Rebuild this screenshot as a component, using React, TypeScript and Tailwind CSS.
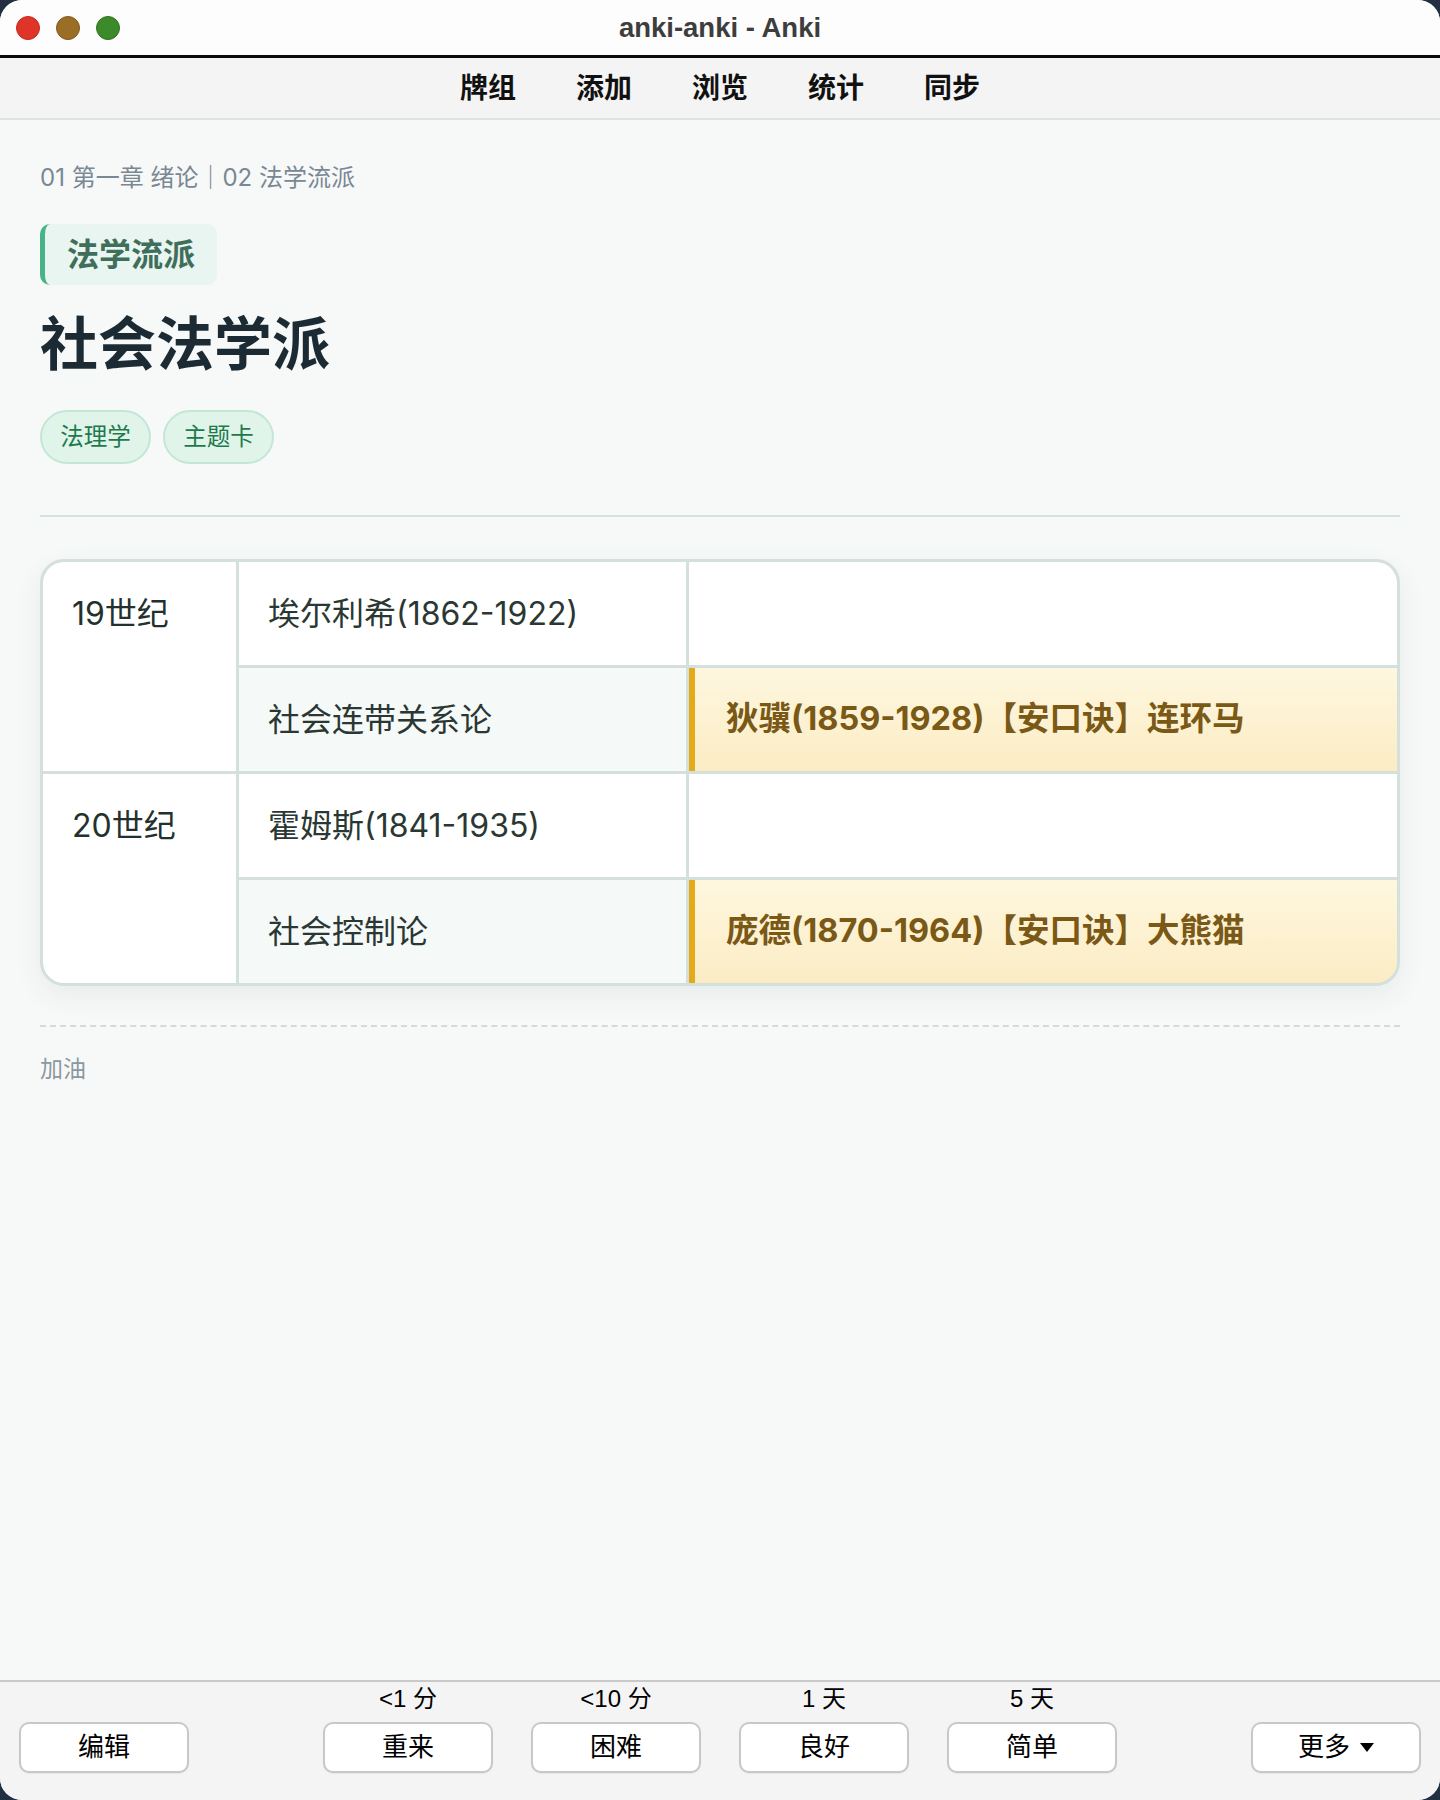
import React from "react";

const sans = { fontFamily: '"Inter", "Noto Sans CJK SC", sans-serif' };
const mac = { fontFamily: '"Liberation Sans", "Noto Sans CJK SC", sans-serif' };

function TrafficLights() {
  return (
    <div className="flex items-center gap-[16px] pl-[16px]">
      <span className="block h-[24px] w-[24px] rounded-full bg-[#df3428] border border-[#c1291f]" />
      <span className="block h-[24px] w-[24px] rounded-full bg-[#9a6e27] border border-[#80591c]" />
      <span className="block h-[24px] w-[24px] rounded-full bg-[#3c8a29] border border-[#2f7220]" />
    </div>
  );
}

function Toolbar() {
  const items = ["牌组", "添加", "浏览", "统计", "同步"];
  return (
    <div
      className="flex h-[62px] items-center justify-center gap-[60px] border-b-[2px] border-[#e2e2e2] bg-[#f4f4f4] pt-[2px]"
      style={mac}
    >
      {items.map((t) => (
        <span key={t} className="text-[28px] font-bold leading-none text-[#111]">
          {t}
        </span>
      ))}
    </div>
  );
}

type Row = {
  era: string;
  person: string;
  theory: string;
  tip: string;
};

const rows: Row[] = [
  {
    era: "19世纪",
    person: "埃尔利希(1862-1922)",
    theory: "社会连带关系论",
    tip: "狄骥(1859-1928)【安口诀】连环马",
  },
  {
    era: "20世纪",
    person: "霍姆斯(1841-1935)",
    theory: "社会控制论",
    tip: "庞德(1870-1964)【安口诀】大熊猫",
  },
];

function SchoolTable() {
  return (
    <div className="mt-[42px] overflow-hidden rounded-[24px] border-[3px] border-[#d4e0dc] bg-[#d4e0dc] shadow-[0_10px_28px_rgba(20,60,50,0.07)]">
      <div className="grid grid-cols-[193px_447px_1fr] gap-[3px]">
        {rows.map((r) => (
          <React.Fragment key={r.era}>
            <div className="row-span-2 bg-white px-[29px]">
              <div className="flex h-[103px] items-center text-[32px] text-[#24302d]">{r.era}</div>
            </div>
            <div className="flex h-[103px] items-center bg-white px-[29px] text-[32px] text-[#2a3733]">
              {r.person}
            </div>
            <div className="h-[103px] bg-white" />
            <div className="flex h-[103px] items-center bg-[#f5f9f8] px-[29px] text-[32px] text-[#2a3733]">
              {r.theory}
            </div>
            <div className="flex h-[103px] items-center border-l-[6px] border-[#e3aa1c] bg-linear-to-b from-[#fef7df] to-[#fbecc4] pl-[31px] text-[32.5px] font-bold text-[#7a5816]">
              {r.tip}
            </div>
          </React.Fragment>
        ))}
      </div>
    </div>
  );
}

function Card() {
  return (
    <div className="flex-1 bg-[#f7f9f8] px-[40px] pt-[42px]" style={sans}>
      <div className="text-[24px] leading-[32px] text-[#7a8794]">01 第一章 绪论｜02 法学流派</div>

      <div className="mt-[30px] inline-flex h-[61px] items-center rounded-[10px] border-l-[5px] border-[#48b386] bg-[#e8f5f0] pl-[22px] pr-[22px]">
        <span className="text-[32px] font-bold text-[#3f6e5a]">法学流派</span>
      </div>

      <h1 className="mt-[25px] text-[58px] font-bold leading-[68px] text-[#1b2a33]">社会法学派</h1>

      <div className="mt-[32px] flex gap-[12px]">
        {["法理学", "主题卡"].map((t) => (
          <span
            key={t}
            className="flex h-[54px] w-[111px] items-center justify-center rounded-full border-[2px] border-[#c3e7d6] bg-[#e0f4ea] text-[23.5px] text-[#1e7a4d]"
          >
            {t}
          </span>
        ))}
      </div>

      <div className="mt-[51px] h-[2px] bg-[#d6e2de]" />

      <SchoolTable />

      <div className="mt-[39px] border-t-[2px] border-dashed border-[#d3dbd9]" />

      <div className="mt-[29px] text-[23px] leading-[26px] text-[#8b98a2]">加油</div>
    </div>
  );
}

function AnswerButton({ label, caret }: { label: string; caret?: boolean }) {
  return (
    <button className="flex h-[51px] w-[170px] items-center justify-center gap-[10px] rounded-[10px] border-[2px] border-[#c8c8c8] bg-white text-[26px] text-black shadow-[0_1px_1px_rgba(0,0,0,0.06)]">
      <span>{label}</span>
      {caret && (
        <svg width="14" height="9" viewBox="0 0 14 9">
          <path d="M0 0 L14 0 L7 9 Z" fill="#000" />
        </svg>
      )}
    </button>
  );
}

function BottomBar() {
  const answers = [
    { iv: "<1 分", label: "重来" },
    { iv: "<10 分", label: "困难" },
    { iv: "1 天", label: "良好" },
    { iv: "5 天", label: "简单" },
  ];
  return (
    <div
      className="grid h-[120px] grid-cols-[1fr_auto_1fr] border-t-[2px] border-[#c9c9c9] bg-[#f4f4f4] px-[19px] pb-[27px]"
      style={mac}
    >
      <div className="flex items-end">
        <AnswerButton label="编辑" />
      </div>
      <div className="flex items-end gap-[38px]">
        {answers.map((a) => (
          <div key={a.label} className="flex flex-col items-center">
            <div className="h-[30px] text-[24px] leading-[30px] text-black">{a.iv}</div>
            <div className="mt-[8px]">
              <AnswerButton label={a.label} />
            </div>
          </div>
        ))}
      </div>
      <div className="flex items-end justify-end">
        <AnswerButton label="更多" caret />
      </div>
    </div>
  );
}

export default function App() {
  return (
    <div className="h-[1800px] w-[1440px] bg-[#223044]">
      <div className="flex h-full w-full flex-col overflow-hidden rounded-[22px] bg-[#f7f9f8]">
        <div className="relative flex h-[55px] items-center bg-[#fdfdfd]">
          <TrafficLights />
          <div
            className="absolute inset-0 flex items-center justify-center text-[27.5px] font-bold text-[#3d3d3d]"
            style={mac}
          >
            anki-anki - Anki
          </div>
        </div>
        <div className="h-[3px] bg-[#0b0b0b]" />
        <Toolbar />
        <Card />
        <BottomBar />
      </div>
    </div>
  );
}
